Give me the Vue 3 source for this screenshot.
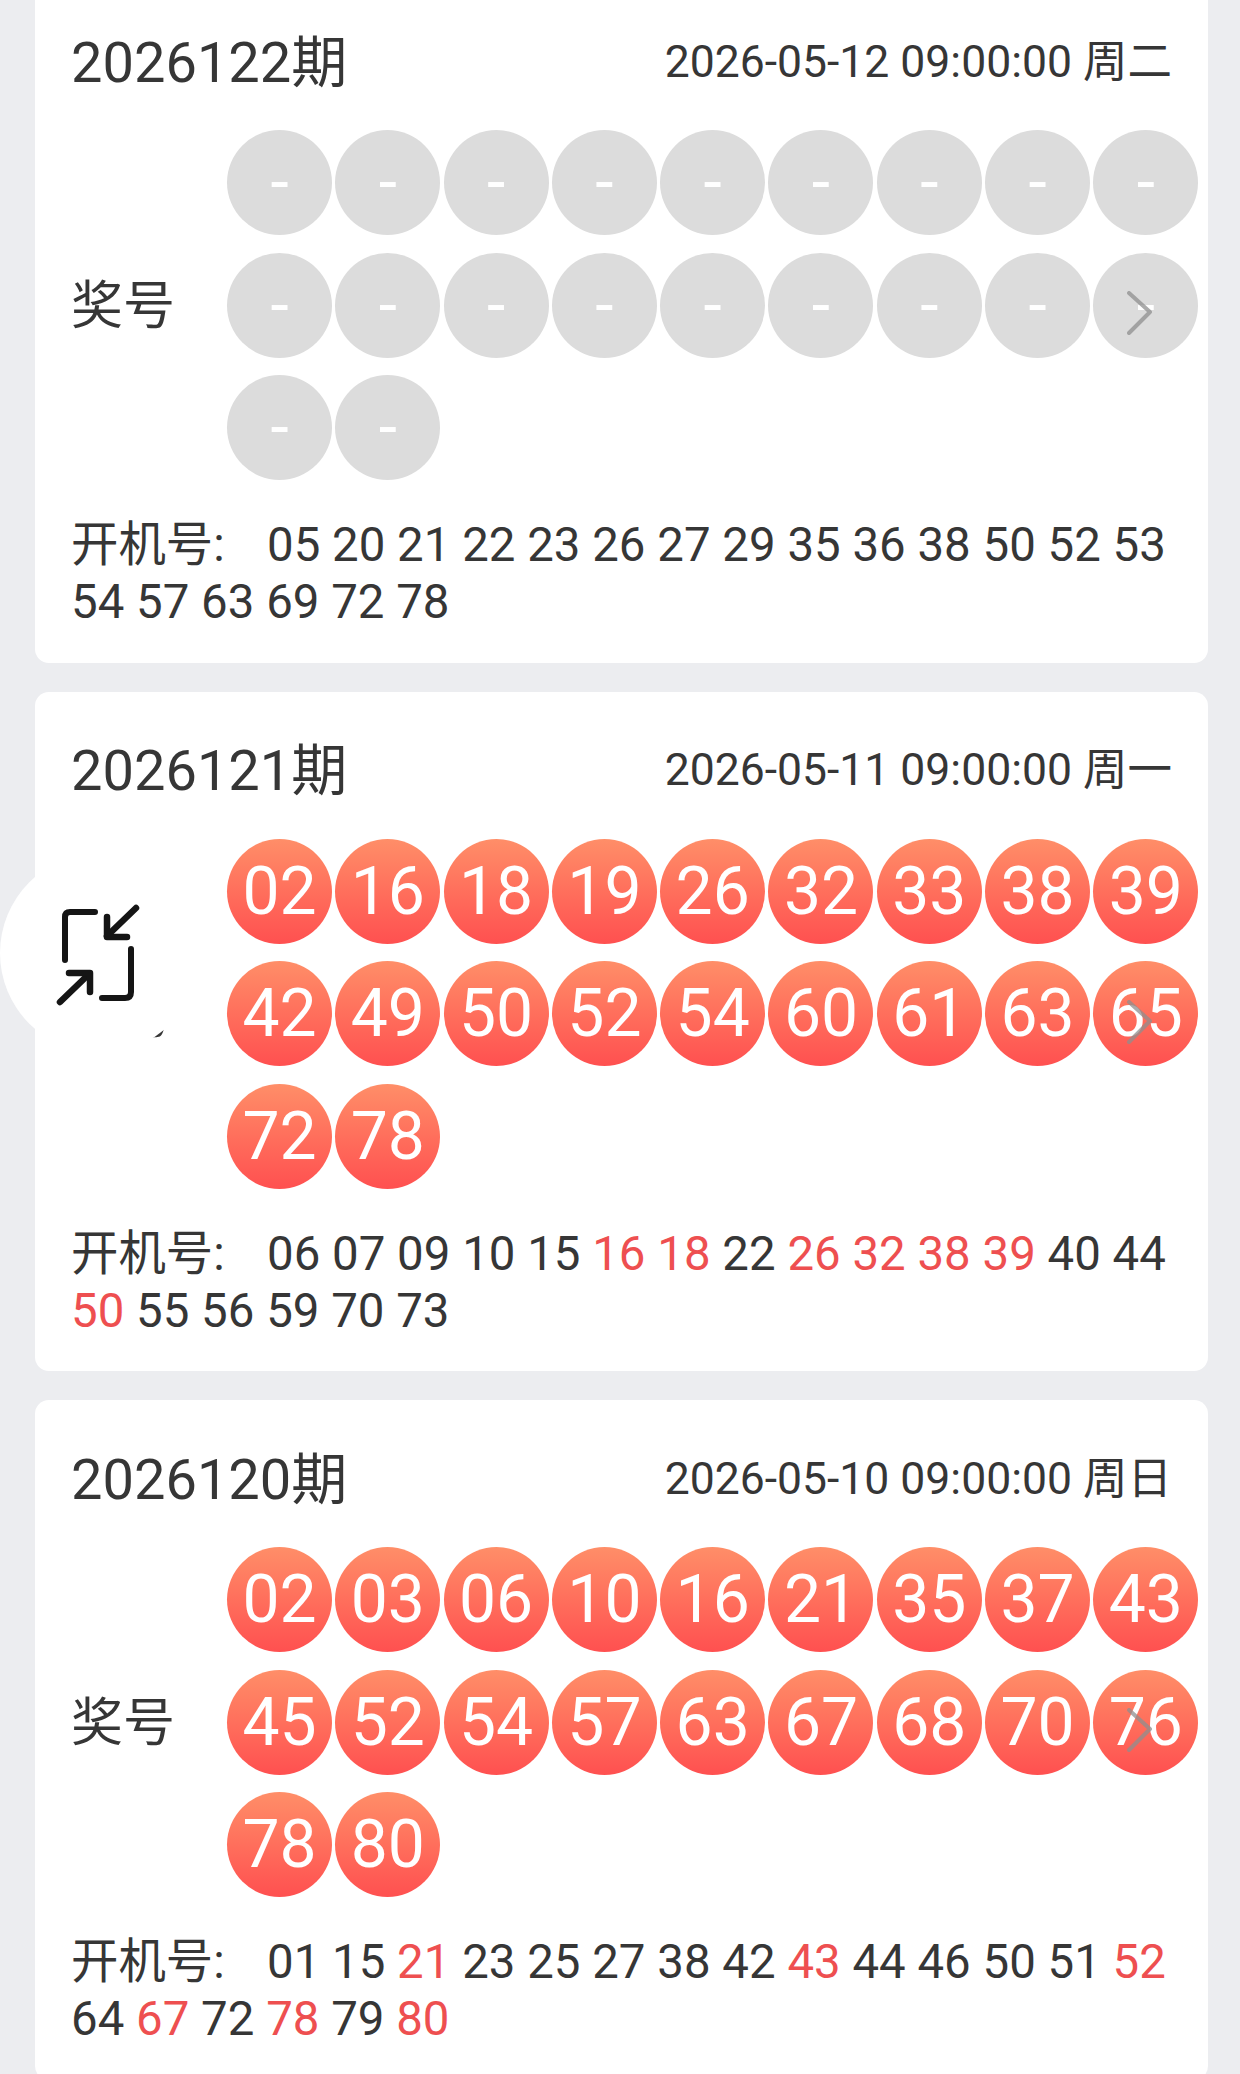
<script setup>
const makeOpen = (s) => s.split(' ').map((t) => ({ n: t.replace('*', ''), hit: t.includes('*') }))
const cards = [
  {
    id: '2026122期', date: '2026-05-12 09:00:00 周二', drawn: false,
    balls: Array(20).fill('-'),
    open: makeOpen('05 20 21 22 23 26 27 29 35 36 38 50 52 53 54 57 63 69 72 78'),
  },
  {
    id: '2026121期', date: '2026-05-11 09:00:00 周一', drawn: true,
    balls: '02 16 18 19 26 32 33 38 39 42 49 50 52 54 60 61 63 65 72 78'.split(' '),
    open: makeOpen('06 07 09 10 15 16* 18* 22 26* 32* 38* 39* 40 44 50* 55 56 59 70 73'),
  },
  {
    id: '2026120期', date: '2026-05-10 09:00:00 周日', drawn: true,
    balls: '02 03 06 10 16 21 35 37 43 45 52 54 57 63 67 68 70 76 78 80'.split(' '),
    open: makeOpen('01 15 21* 23 25 27 38 42 43* 44 46 50 51 52* 64 67* 72 78* 79 80*'),
  },
]
</script>

<template>
  <div class="page">
    <div class="list">
      <section v-for="c in cards" :key="c.id" class="card">
        <header class="head">
          <span class="issue">{{ c.id }}</span>
          <span class="date">{{ c.date }}</span>
        </header>
        <div class="prize">
          <span class="label">奖号</span>
          <div class="balls">
            <span v-for="(b, i) in c.balls" :key="i" class="ball" :class="{ on: c.drawn }">{{ b }}</span>
          </div>
          <svg class="chev" viewBox="0 0 26 44" width="26" height="44">
            <path d="M2 2 L23 21 L2 42" fill="none" stroke="#8f8f8f" stroke-opacity="0.75" stroke-width="4" stroke-linecap="round" stroke-linejoin="round" />
          </svg>
        </div>
        <p class="open">
          <span class="open-label">开机号:</span>
          <template v-for="o in c.open" :key="o.n"><span :class="{ hit: o.hit }">{{ o.n }}</span>{{ ' ' }}</template>
        </p>
      </section>
    </div>
    <button class="fab" type="button" aria-label="collapse">
      <svg viewBox="50 893 100 120" width="100" height="120">
        <g fill="none" stroke="#151515" stroke-width="6" stroke-linecap="round" stroke-linejoin="round">
          <path d="M65 960 V917 Q65 912 70 912 H95" />
          <path d="M131 949 V992 Q131 998 125 998 H102" />
          <g stroke-width="6.5">
            <path d="M136 908 L107 936" />
            <path d="M107 917 V937 H127" />
            <path d="M60 1002 L89 974" />
            <path d="M69 973 H90 V992" />
          </g>
        </g>
      </svg>
    </button>
  </div>
</template>

<style>
html, body { margin: 0; background: #ecedf0; }
</style>

<style scoped>
.page {
  position: relative;
  width: 1240px;
  height: 2074px;
  overflow: hidden;
  background: #ecedf0;
  font-family: Roboto, "Noto Sans CJK SC", sans-serif;
  color: #363636;
}
.list {
  display: flex;
  flex-direction: column;
  gap: 29px;
  margin: -17px 32px 0 35px;
}
.card {
  background: #fff;
  border-radius: 14px;
  padding: 37px 7px 0 36px;
  height: 679.5px;
  box-sizing: border-box;
  flex: none;
}
.head {
  display: flex;
  justify-content: space-between;
  align-items: center;
  height: 74px;
  padding-right: 29px;
}
.issue { font-size: 56px; }
.date { font-size: 44.5px; }
.prize {
  position: relative;
  display: flex;
  align-items: center;
  margin-top: 36px;
}
.label {
  width: 156px;
  flex: none;
  font-size: 52px;
  line-height: 60px;
  margin-top: 4px;
}
.balls {
  display: flex;
  flex-wrap: wrap;
  gap: 17.5px 3.3px;
  width: 973px;
}
.ball {
  width: 105px;
  height: 105px;
  border-radius: 50%;
  display: flex;
  align-items: center;
  justify-content: center;
  background: #dcdcdc;
  color: #fff;
  font-size: 66px;
}
.ball.on { background: linear-gradient(180deg, #ff8e68 0%, #ff5050 100%); }
.chev {
  position: absolute;
  left: 1056px;
  top: 161px;
}
.open {
  margin: 37px 0 0;
  font-size: 47.4px;
  line-height: 57px;
  width: 1110px;
}
.open-label { display: inline-block; width: 196px; }
.hit { color: #ee4f50; }
.fab {
  position: absolute;
  left: 0;
  top: 853px;
  width: 200px;
  height: 200px;
  padding: 0;
  border: 0;
  border-radius: 50%;
  background: #fff;
  display: flex;
  align-items: center;
  justify-content: center;
}
</style>
